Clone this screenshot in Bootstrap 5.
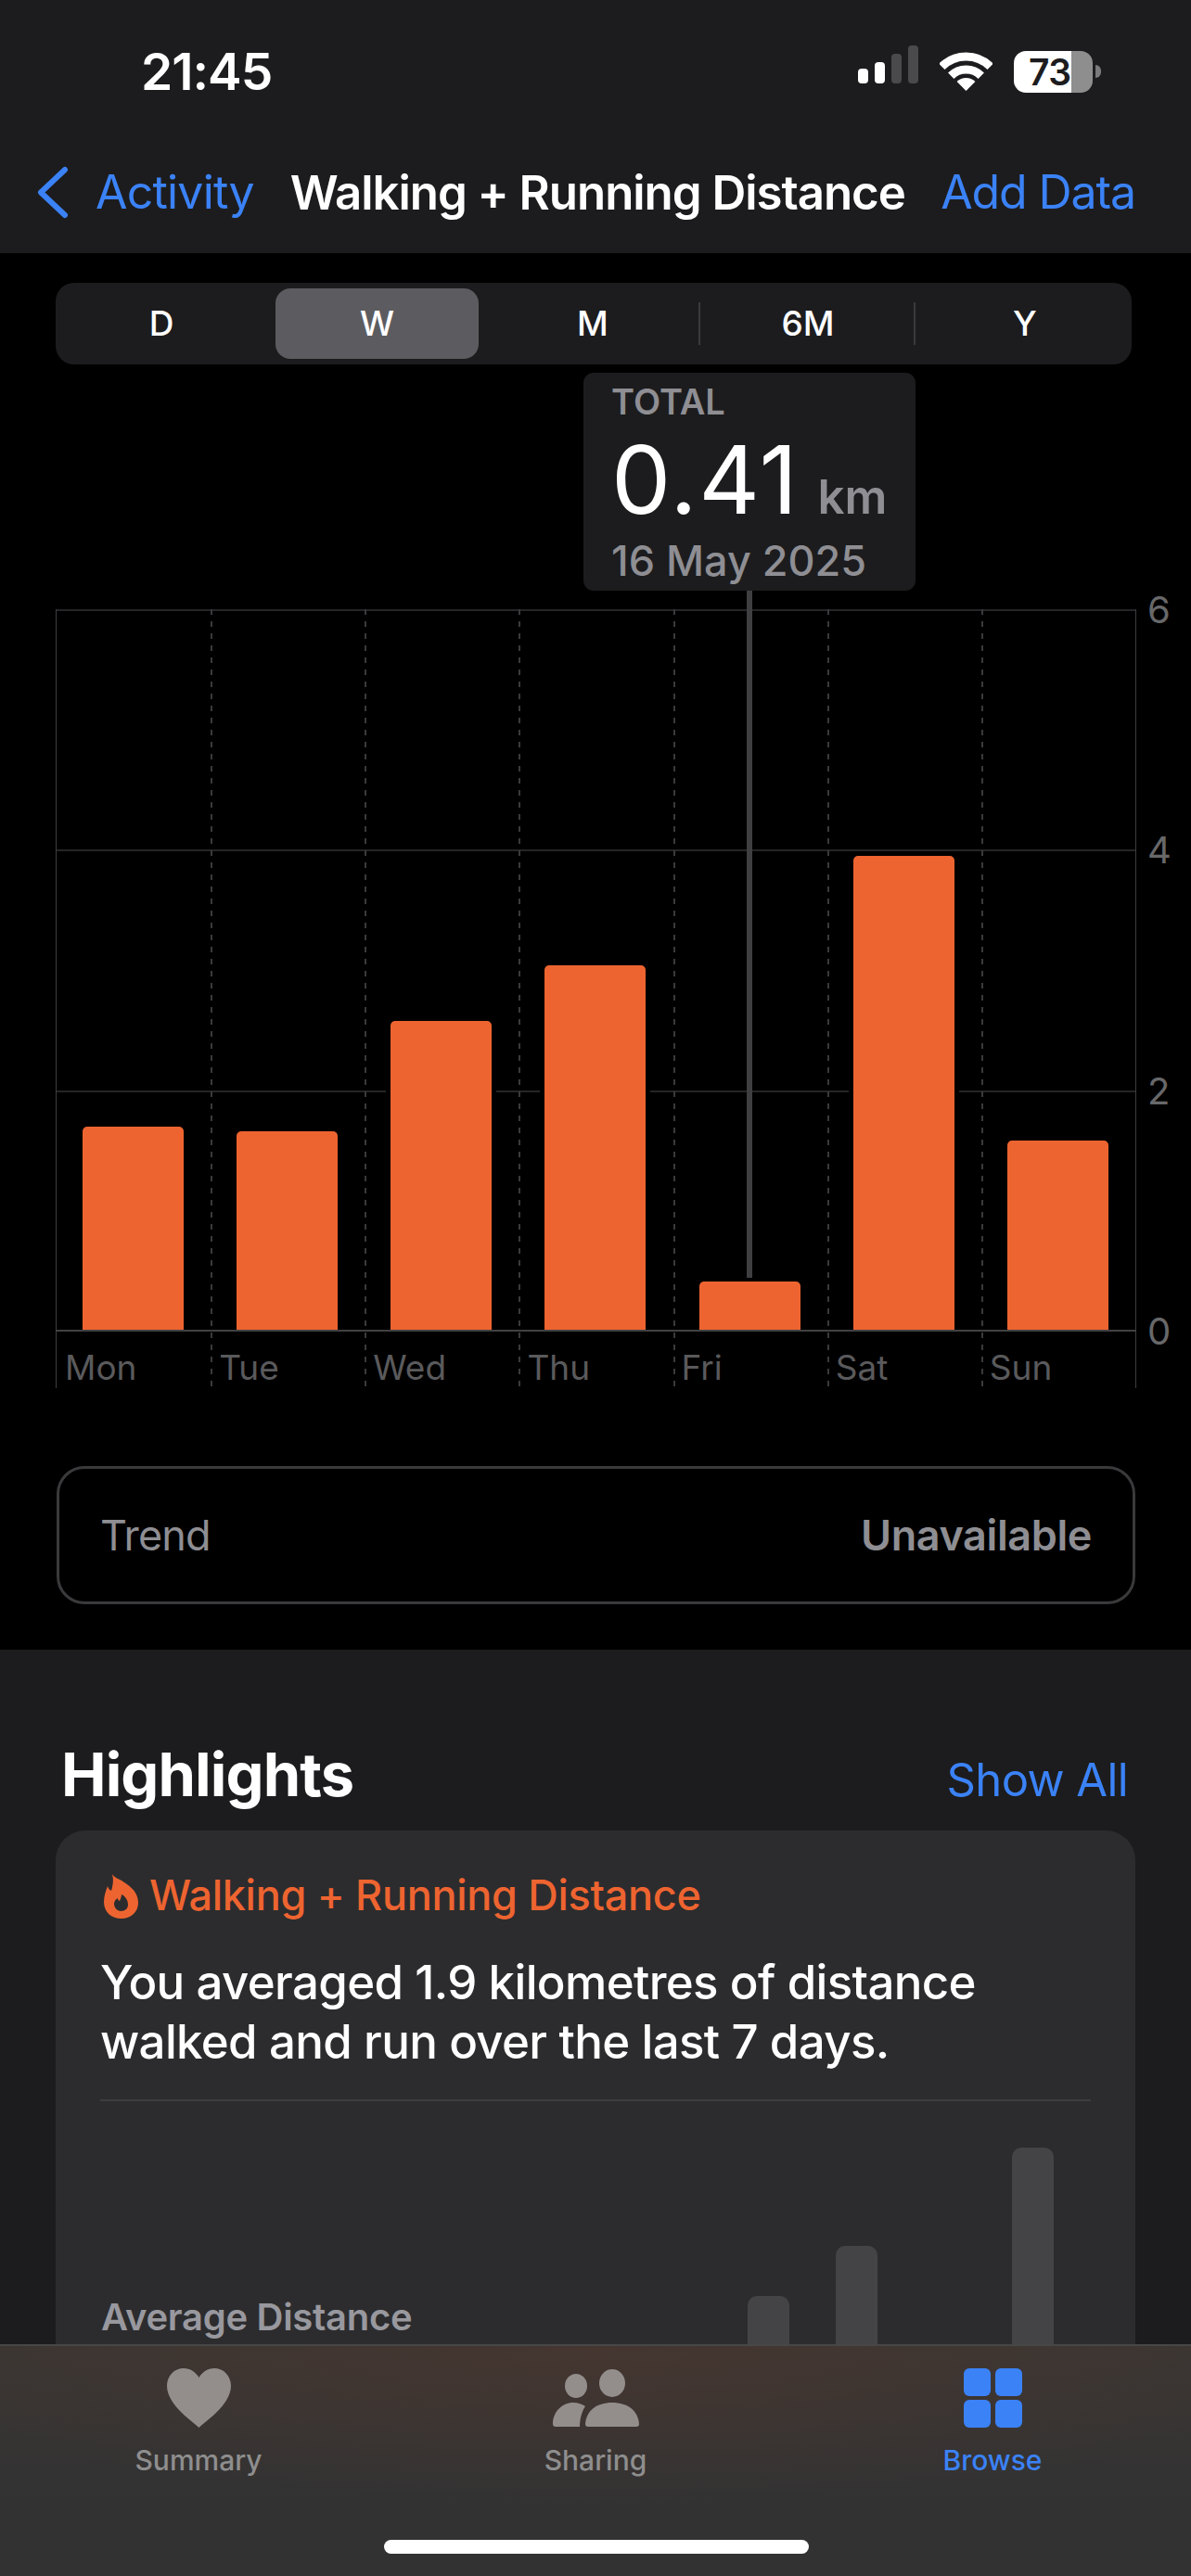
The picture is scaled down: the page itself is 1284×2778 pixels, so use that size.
<!DOCTYPE html>
<html lang="en">
<head>
  <meta charset="UTF-8" />
  <meta name="viewport" content="width=device-width, initial-scale=1.0" />
  <title>Walking + Running Distance</title>
  <link href="https://cdn.jsdelivr.net/npm/bootstrap@5.3.0/dist/css/bootstrap.min.css" rel="stylesheet" />
  <style>
    html, body { background: #000; }
    body {
      width: 1284px;
      height: 2778px;
      overflow: hidden;
      font-family: Inter, "Liberation Sans", sans-serif;
      color: #fff;
    }
    .ios-blue { color: #3b82f6; }

    /* top bar */
    .top-bar { background: #1c1c1e; height: 273px; }
    .status-row { height: 154px; padding: 0 97px 0 152px; }
    .status-time { font-size: 55px; font-weight: 600; letter-spacing: -1px; line-height: 1; }
    .signal { gap: 7px; height: 41px; margin-right: 23px; }
    .signal span { width: 11px; border-radius: 4px; background: #fff; }
    .signal .off { background: #4a4a4c; }
    .signal .h1 { height: 16px; }
    .signal .h2 { height: 23px; }
    .signal .h3 { height: 32px; }
    .signal .h4 { height: 41px; }
    .wifi-icon { width: 57px; height: 42px; margin-right: 23px; }
    .battery {
      width: 85px;
      height: 45px;
      border-radius: 13px;
      background: linear-gradient(90deg, #fff 62px, #8e8e8e 62px);
      color: #1c1c1e;
      font-size: 39px;
      font-weight: 600;
      line-height: 45px;
      padding-left: 16px;
      letter-spacing: -.5px;
    }
    .battery-cap { width: 6px; height: 14px; background: #7a7a7c; border-radius: 0 7px 7px 0; margin-left: 3px; }
    .nav-row { height: 106px; padding: 0 60px 0 39px; font-size: 50px; line-height: 1; letter-spacing: -.8px; }
    .back-icon { width: 35px; height: 57px; margin-right: 29px; }
    .nav-title { font-weight: 600; font-size: 51px; margin-left: 39px; letter-spacing: -1.05px; }
    .nav-add { letter-spacing: -1.1px; }

    /* range picker */
    .range-wrap { padding-top: 32px; }
    .range-picker { background: #1c1c1e; height: 88px; margin: 0 64px 0 60px; border-radius: 20px; padding: 6px 0; }
    .range-item { width: 232px; font-size: 37px; font-weight: 500; position: relative; }
    .range-item:first-child { width: 228px; }
    .range-item:last-child { padding-left: 4px; }
    .range-item.is-on { background: #5c5c60; border-radius: 16px; margin: 0 7px 0 9px; width: 219px; }
    .range-item.has-rule::after {
      content: "";
      position: absolute;
      right: 0;
      top: 15px;
      bottom: 15px;
      width: 2px;
      background: #3a3a3c;
    }

    /* tooltip */
    .readout {
      position: absolute;
      left: 629px;
      top: 129px;
      width: 358px;
      height: 235px;
      background: #1c1c1e;
      border-radius: 11px;
      padding: 8px 30px;
      z-index: 3;
    }
    .readout-label { font-size: 38px; font-weight: 600; line-height: 46px; color: #8e8e93; }
    .readout-value { font-size: 102px; line-height: 122px; font-weight: 400; letter-spacing: 1.5px; }
    .readout-unit { font-size: 51px; font-weight: 600; color: #8e8e93; margin-left: 20px; letter-spacing: 0; }
    .readout-date { font-size: 45px; font-weight: 500; line-height: 56px; color: #8e8e93; margin-top: -20px; }
    .cursor-line {
      position: absolute;
      left: 805px;
      top: 364px;
      width: 6px;
      height: 741px;
      background: #3f3f41;
      z-index: 3;
    }

    /* chart */
    .chart-area { position: relative; margin: 264px 0 0 60px; width: 1165px; height: 840px; }
    .grid-lines { position: absolute; left: 0; right: 0; top: 0; height: 778px; }
    .grid-lines div { border-top: 2px solid #252527; }
    .axis-line { position: absolute; left: 0; right: 0; top: 777px; border-top: 2px solid #414143; }
    .day-cols { position: absolute; inset: 0; border-left: 1px solid #3e3e40; border-right: 1px solid #3e3e40; }
    .day-col { flex: 1 1 0; position: relative; }
    .day-col + .day-col::before {
      content: "";
      position: absolute;
      left: 0;
      top: 0;
      bottom: 0;
      width: 2px;
      background: repeating-linear-gradient(#3a3a3c 0 6px, transparent 6px 13px);
    }
    .day-plot { height: 778px; padding-right: 1px; }
    .day-bar {
      width: 109px;
      background: #ee6430;
      border-radius: 5px 5px 0 0;
      box-shadow: 0 0 0 5px #000;
      position: relative;
    }
    .day-name { font-size: 37px; color: #5a5a5c; padding: 18px 0 0 9px; line-height: 44px; }
    .y-axis {
      position: absolute;
      left: 1177px;
      top: 1px;
      height: 778px;
      font-size: 40px;
      color: #68686a;
    }
    .y-axis span { height: 0; line-height: 0; }

    /* trend */
    .trend-box {
      margin: 84px 60px 0 61px;
      height: 149px;
      border: 3px solid #3a3a3c;
      border-radius: 30px;
      padding: 0 44px;
      font-size: 45px;
      color: #8e8e93;
    }
    .trend-name { letter-spacing: -.9px; }
    .trend-value { font-weight: 600; letter-spacing: -.4px; }

    /* highlights */
    .highlights { background: #1c1c1e; margin-top: 49px; padding: 0 60px; height: 1000px; }
    .high-head { height: 195px; padding: 96px 8px 0 6px; }
    .high-title { font-size: 65px; font-weight: 700; letter-spacing: -.9px; line-height: 1.2; margin: 0; }
    .high-link { font-size: 49px; letter-spacing: -.6px; }
    .high-card {
      background: #2c2c2e;
      border: 0;
      border-radius: 32px;
      color: #fff;
      padding: 42px 48px 0;
      min-height: 800px;
    }
    .flame-icon { width: 38px; height: 50px; margin: 0 11px 0 4px; }
    .card-kicker { font-size: 45px; font-weight: 500; color: #ee6430; line-height: 56px; letter-spacing: -.3px; }
    .card-copy { font-size: 51px; font-weight: 500; line-height: 64px; margin: 34px 0 0 0; letter-spacing: -.65px; }
    .card-rule { height: 2px; background: #3d3d3f; margin-top: 30px; }
    .mini-row { height: 294px; }
    .mini-label { font-size: 40px; font-weight: 600; color: #98989e; margin: 0 0 36px 1px; line-height: 50px; letter-spacing: -.3px; }
    .mini-bars { gap: 50px; margin-right: 40px; }
    .mini-bar { width: 45px; background: #444446; border-radius: 10px 10px 0 0; }

    /* tab bar */
    .tab-bar {
      position: absolute;
      left: 0;
      right: 0;
      bottom: 0;
      height: 250px;
      border-top: 2px solid #474747;
      padding-top: 24px;
      background:
        radial-gradient(ellipse 800px 170px at 50% 0, rgba(76, 54, 46, .6), rgba(76, 54, 46, 0)),
        linear-gradient(#3a3633, #323233 70%);
      z-index: 5;
    }
    .tab-icon { height: 64px; display: block; margin: 0 auto; }
    .tab-name { font-size: 30px; font-weight: 500; line-height: 40px; margin-top: 15px; color: #8e8e8e; }
    .tab-name.ios-blue { color: #3b82f6; }
    .home-bar {
      position: absolute;
      left: 414px;
      top: 209px;
      width: 458px;
      height: 15px;
      border-radius: 8px;
      background: #fff;
    }
  </style>
</head>
<body class="position-relative">

  <header class="top-bar">
    <div class="status-row d-flex justify-content-between align-items-center">
      <div class="status-time">21:45</div>
      <div class="d-flex align-items-center">
        <div class="signal d-flex align-items-end">
          <span class="h1"></span><span class="h2"></span><span class="h3 off"></span><span class="h4 off"></span>
        </div>
        <svg class="wifi-icon" viewBox="0 0 57 42" fill="none" stroke="#fff" stroke-width="9">
          <path d="M2.34 15.84A37 37 0 0 1 54.66 15.84" />
          <path d="M12.24 25.74A23 23 0 0 1 44.76 25.74" />
          <path d="M28.5 42L18.6 32.1A14 14 0 0 1 38.4 32.1Z" fill="#fff" stroke="none" />
        </svg>
        <div class="battery">73</div>
        <div class="battery-cap"></div>
      </div>
    </div>
    <nav class="nav-row d-flex align-items-center">
      <svg class="back-icon" viewBox="0 0 35 57" fill="none" stroke="#3b82f6" stroke-width="6" stroke-linecap="round" stroke-linejoin="round">
        <path d="M31 4L5 28.5L31 53" />
      </svg>
      <span class="ios-blue">Activity</span>
      <span class="nav-title">Walking + Running Distance</span>
      <span class="ios-blue nav-add ms-auto">Add Data</span>
    </nav>
  </header>

  <main class="range-wrap position-relative">
    <div class="range-picker d-flex">
      <div class="range-item d-flex align-items-center justify-content-center">D</div>
      <div class="range-item is-on d-flex align-items-center justify-content-center">W</div>
      <div class="range-item has-rule d-flex align-items-center justify-content-center">M</div>
      <div class="range-item has-rule d-flex align-items-center justify-content-center">6M</div>
      <div class="range-item d-flex align-items-center justify-content-center">Y</div>
    </div>

    <div class="readout">
      <div class="readout-label">TOTAL</div>
      <div class="readout-value">0.41<span class="readout-unit">km</span></div>
      <div class="readout-date">16 May 2025</div>
    </div>
    <div class="cursor-line"></div>

    <div class="chart-area">
      <div class="grid-lines d-flex flex-column">
        <div class="flex-fill"></div>
        <div class="flex-fill"></div>
        <div class="flex-fill"></div>
      </div>
      <div class="day-cols d-flex">
        <div class="day-col">
          <div class="day-plot d-flex align-items-end justify-content-center"><div class="day-bar" style="height:220px"></div></div>
          <div class="day-name">Mon</div>
        </div>
        <div class="day-col">
          <div class="day-plot d-flex align-items-end justify-content-center"><div class="day-bar" style="height:215px"></div></div>
          <div class="day-name">Tue</div>
        </div>
        <div class="day-col">
          <div class="day-plot d-flex align-items-end justify-content-center"><div class="day-bar" style="height:334px"></div></div>
          <div class="day-name">Wed</div>
        </div>
        <div class="day-col">
          <div class="day-plot d-flex align-items-end justify-content-center"><div class="day-bar" style="height:394px"></div></div>
          <div class="day-name">Thu</div>
        </div>
        <div class="day-col">
          <div class="day-plot d-flex align-items-end justify-content-center"><div class="day-bar" style="height:53px"></div></div>
          <div class="day-name">Fri</div>
        </div>
        <div class="day-col">
          <div class="day-plot d-flex align-items-end justify-content-center"><div class="day-bar" style="height:512px"></div></div>
          <div class="day-name">Sat</div>
        </div>
        <div class="day-col">
          <div class="day-plot d-flex align-items-end justify-content-center"><div class="day-bar" style="height:205px"></div></div>
          <div class="day-name">Sun</div>
        </div>
      </div>
      <div class="axis-line"></div>
      <div class="y-axis d-flex flex-column justify-content-between">
        <span>6</span><span>4</span><span>2</span><span>0</span>
      </div>
    </div>

    <div class="trend-box d-flex justify-content-between align-items-center">
      <span class="trend-name">Trend</span>
      <span class="trend-value">Unavailable</span>
    </div>

    <section class="highlights">
      <div class="high-head d-flex justify-content-between align-items-baseline">
        <h2 class="high-title">Highlights</h2>
        <span class="high-link ios-blue">Show All</span>
      </div>
      <div class="card high-card">
        <div class="d-flex align-items-center">
          <svg class="flame-icon" viewBox="0 0 38 50" fill="#ee6430" fill-rule="evenodd">
            <path d="M8 0C10 6 15 6 22 11C31 17 37 23 37 33C37 43 29 50 19 50C8 50 0 43 0 32C0 26 2 20 4 15C5 18 6 19 8 20C10 13 11 6 8 0ZM18.5 42C14 42 11 38 11 34C11 31 13 29 15 28C15 30 16 31 17 31C18 29 19 26 19 24C23 26 26 30 26 35C26 39 23 42 18.5 42Z" />
          </svg>
          <span class="card-kicker">Walking + Running Distance</span>
        </div>
        <p class="card-copy">You averaged 1.9 kilometres of distance<br />walked and run over the last 7 days.</p>
        <div class="card-rule"></div>
        <div class="mini-row d-flex justify-content-between align-items-end">
          <div class="mini-label">Average Distance</div>
          <div class="mini-bars d-flex align-items-end">
            <div class="mini-bar" style="height:84px"></div>
            <div class="mini-bar" style="height:138px"></div>
            <div class="mini-bar" style="height:0"></div>
            <div class="mini-bar" style="height:244px"></div>
          </div>
        </div>
      </div>
    </section>
  </main>

  <footer class="tab-bar">
    <div class="row g-0 text-center">
      <div class="col-4">
        <svg class="tab-icon" viewBox="0 0 69 64" fill="#938e8c">
          <path d="M34.5 64C30 59 0 40 0 19C0 8 8 0 18 0C25 0 31 4 34.5 10C38 4 44 0 51 0C61 0 69 8 69 19C69 40 39 59 34.5 64Z" />
        </svg>
        <div class="tab-name">Summary</div>
      </div>
      <div class="col-4">
        <svg class="tab-icon" viewBox="0 0 93 64" fill="#938e8c">
          <ellipse cx="64" cy="16" rx="14" ry="15" />
          <ellipse cx="25" cy="19" rx="12" ry="13" />
          <path d="M38 63Q35 63 35 60C36 46 47 37 64 37C81 37 92 46 93 60Q93 63 90 63Z" />
          <path d="M3 63Q0 63 0 60C0 47 10 37 22 37C27 37 32 39 35 41C31 47 29 55 29 63Z" />
        </svg>
        <div class="tab-name">Sharing</div>
      </div>
      <div class="col-4">
        <svg class="tab-icon" viewBox="0 0 63 64" fill="#3b82f6">
          <rect x="0" y="0" width="29" height="30" rx="6" />
          <rect x="34" y="0" width="29" height="30" rx="6" />
          <rect x="0" y="34" width="29" height="30" rx="6" />
          <rect x="34" y="34" width="29" height="30" rx="6" />
        </svg>
        <div class="tab-name ios-blue">Browse</div>
      </div>
    </div>
    <div class="home-bar"></div>
  </footer>

  <script src="https://cdn.jsdelivr.net/npm/bootstrap@5.3.0/dist/js/bootstrap.bundle.min.js"></script>
</body>
</html>
